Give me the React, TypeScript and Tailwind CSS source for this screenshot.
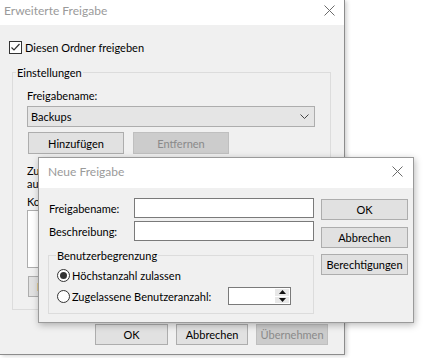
import React from "react";

function CloseX() {
  return (
    <svg width="11" height="11" viewBox="0 0 11 11" className="shrink-0">
      <path d="M0.5 0.5 L10.5 10.5 M10.5 0.5 L0.5 10.5" stroke="#6b6b6b" strokeWidth="1" fill="none" />
    </svg>
  );
}

function Btn({ children, className = "", disabled = false }: { children?: React.ReactNode; className?: string; disabled?: boolean }) {
  return (
    <div
      className={
        "flex items-center justify-center border " +
        (disabled ? "border-[#bfbfbf] bg-[#cccccc] text-[#8a8a8a]" : "border-[#adadad] bg-[#e1e1e1] text-black") +
        " " +
        className
      }
    >
      {children}
    </div>
  );
}

function Checkbox() {
  return (
    <svg width="13" height="13" viewBox="0 0 13 13" className="shrink-0">
      <rect x="0.5" y="0.5" width="12" height="12" fill="#ffffff" stroke="#333333" />
      <path d="M2.5 6.5 L5 9 L10.5 3" stroke="#333333" strokeWidth="1.2" fill="none" />
    </svg>
  );
}

function Radio({ checked }: { checked?: boolean }) {
  return (
    <svg width="13" height="13" viewBox="0 0 13 13" className="shrink-0">
      <circle cx="6.5" cy="6.5" r="6" fill="#ffffff" stroke="#333333" />
      {checked && <circle cx="6.5" cy="6.5" r="3.5" fill="#333333" />}
    </svg>
  );
}

function Chevron() {
  return (
    <svg width="9" height="5" viewBox="0 0 9 5" className="shrink-0">
      <path d="M0.5 0.5 L4.5 4.5 L8.5 0.5" stroke="#444444" strokeWidth="1" fill="none" />
    </svg>
  );
}

function Spinner() {
  return (
    <div className="flex h-[18px] w-[63px] border border-[#7a7a7a] bg-white">
      <div className="flex-1" />
      <div className="my-[1px] mr-[1px] flex w-[14px] flex-col gap-[1px]">
        <div className="flex flex-1 items-center justify-center bg-[#e8e8e8]">
          <svg width="7" height="4" viewBox="0 0 7 4">
            <path d="M0 4 L3.5 0 L7 4 Z" fill="#111111" />
          </svg>
        </div>
        <div className="flex flex-1 items-center justify-center bg-[#e8e8e8]">
          <svg width="7" height="4" viewBox="0 0 7 4">
            <path d="M0 0 L3.5 4 L7 0 Z" fill="#111111" />
          </svg>
        </div>
      </div>
    </div>
  );
}

export default function App() {
  return (
    <div className="relative h-[358px] w-[448px] overflow-hidden bg-white font-['Lato',sans-serif] text-[11px] leading-[15px] text-black">
      {/* Outer dialog */}
      <div className="flex h-[355px] w-[345px] flex-col border-b border-r border-[#8c8c8c] shadow-[2px_1px_4px_rgba(0,0,0,0.18)]">
        <div className="flex h-[25px] shrink-0 items-start justify-between bg-white pl-[4px] pr-[9px] pt-[3px]">
          <span className="text-[12px] text-[#9a9a9a]">Erweiterte Freigabe</span>
          <div className="mt-[2px]">
            <CloseX />
          </div>
        </div>
        <div className="flex flex-1 flex-col bg-[#f0f0f0]">
          <div className="ml-[9px] mt-[16px] flex h-[13px] items-center gap-[3px]">
            <Checkbox />
            <span>Diesen Ordner freigeben</span>
          </div>
          <fieldset className="ml-[12px] mt-[11px] w-[319px] border border-[#dcdcdc]">
            <legend className="ml-[3px] px-[1px]">Einstellungen</legend>
            <div className="flex flex-col pb-[12px] pl-[14px] pt-[8px]">
              <div>Freigabename:</div>
              <div className="mt-[3px] flex h-[21px] w-[288px] items-center justify-between border border-[#adadad] bg-[#e5e5e5] pl-[3px] pr-[5px]">
                <span>Backups</span>
                <Chevron />
              </div>
              <div className="mt-[5px] flex gap-[9px] pl-[1px]">
                <Btn className="h-[22px] w-[96px]">Hinzufügen</Btn>
                <Btn disabled className="h-[22px] w-[96px]">Entfernen</Btn>
              </div>
              <div className="mt-[10px] leading-[13px]">
                <div>Zu</div>
                <div>au</div>
              </div>
              <div className="mt-[4px]">Ko</div>
              <div className="mt-[1px] h-[58px] w-[288px] border border-[#adadad] bg-white" />
              <div className="mt-[8px] pl-[1px]">
                <div className="flex h-[21px] w-[96px] items-center border border-[#adadad] bg-[#e1e1e1] pl-[8px]">B</div>
              </div>
            </div>
          </fieldset>
          <div className="mt-[14px] flex justify-end gap-[8px] pr-[16px]">
            <Btn className="h-[21px] w-[73px]">OK</Btn>
            <Btn className="h-[21px] w-[72px]">Abbrechen</Btn>
            <Btn disabled className="h-[21px] w-[72px]">Übernehmen</Btn>
          </div>
        </div>
      </div>

      {/* Inner dialog (overlays the outer one) */}
      <div className="absolute left-[38px] top-[157px] flex h-[166px] w-[376px] flex-col border border-[#9a9a9a] shadow-[1px_2px_7px_rgba(0,0,0,0.28)]">
        <div className="flex h-[30px] shrink-0 items-start justify-between bg-white pl-[9px] pr-[10px] pt-[6px]">
          <span className="text-[12px] text-[#9a9a9a]">Neue Freigabe</span>
          <div className="mt-[2px]">
            <CloseX />
          </div>
        </div>
        <div className="flex flex-1 bg-[#f0f0f0] pl-[9px] pt-[10px]">
          <div className="flex w-[266px] flex-col">
            <div className="flex h-[20px] items-center">
              <span className="w-[86px] pl-[1px]">Freigabename:</span>
              <div className="h-[20px] w-[180px] border border-[#7a7a7a] bg-white" />
            </div>
            <div className="mt-[3px] flex h-[20px] items-center">
              <span className="w-[86px] pl-[1px]">Beschreibung:</span>
              <div className="h-[20px] w-[180px] border border-[#7a7a7a] bg-white" />
            </div>
            <fieldset className="mt-[7px] border border-[#dcdcdc]">
              <legend className="ml-[7px] px-[1px]">Benutzerbegrenzung</legend>
              <div className="flex flex-col pb-[8px] pl-[8px] pt-[3px]">
                <div className="flex h-[18px] items-center gap-[2px]">
                  <Radio checked />
                  <span>Höchstanzahl zulassen</span>
                </div>
                <div className="mt-[3px] flex h-[18px] items-center">
                  <div className="flex w-[171px] items-center gap-[2px]">
                    <Radio />
                    <span>Zugelassene Benutzeranzahl:</span>
                  </div>
                  <Spinner />
                </div>
              </div>
            </fieldset>
          </div>
          <div className="ml-[7px] flex w-[87px] flex-col pt-[1px]">
            <Btn className="h-[21px]">OK</Btn>
            <Btn className="mt-[7px] h-[21px]">Abbrechen</Btn>
            <Btn className="mt-[6px] h-[21px]">Berechtigungen</Btn>
          </div>
        </div>
      </div>
    </div>
  );
}
